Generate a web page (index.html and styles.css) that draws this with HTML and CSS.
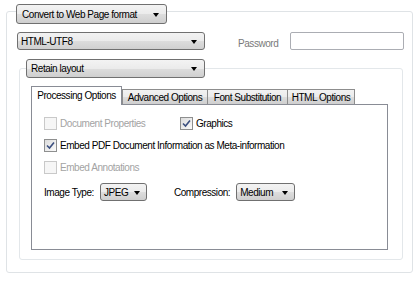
FILE: index.html
```html
<!DOCTYPE html>
<html>
<head>
<meta charset="utf-8">
<link rel="stylesheet" href="styles.css">
</head>
<body>
<div class="outer">
  <div class="combo legend-combo"><span>Convert to Web Page format</span><i class="arrow"></i></div>
  <div class="row1">
    <div class="combo enc-combo"><span>HTML-UTF8</span><i class="arrow"></i></div>
    <span class="pw-label">Password</span>
    <div class="pw-input"></div>
  </div>
  <div class="inner">
    <div class="combo layout-combo"><span>Retain layout</span><i class="arrow"></i></div>
    <div class="tabs">
      <div class="tab selected">Processing Options</div>
      <div class="tab t2">Advanced Options</div>
      <div class="tab t3">Font Substitution</div>
      <div class="tab t4">HTML Options</div>
    </div>
    <div class="panel">
      <div class="cb-row">
        <label class="cb disabled doc"><span class="box"></span>Document Properties</label>
        <label class="cb"><span class="box checked"><svg viewBox="0 0 9 9" width="9" height="9"><path d="M1 4.5 L3.5 7 L8 1.5" fill="none" stroke="#3b4f7f" stroke-width="1.6"/></svg></span>Graphics</label>
      </div>
      <div class="cb-row">
        <label class="cb"><span class="box checked"><svg viewBox="0 0 9 9" width="9" height="9"><path d="M1 4.5 L3.5 7 L8 1.5" fill="none" stroke="#3b4f7f" stroke-width="1.6"/></svg></span>Embed PDF Document Information as Meta-information</label>
      </div>
      <div class="cb-row">
        <label class="cb disabled"><span class="box"></span>Embed Annotations</label>
      </div>
      <div class="img-row">
        <span class="lbl">Image Type:</span>
        <div class="combo small jpeg"><span>JPEG</span><i class="arrow"></i></div>
        <span class="lbl comp">Compression:</span>
        <div class="combo small medium"><span>Medium</span><i class="arrow"></i></div>
      </div>
    </div>
  </div>
</div>
</body>
</html>
```
FILE: styles.css
```css
* { box-sizing: border-box; }
html, body { margin: 0; padding: 0; background: #fff; }
body {
  font-family: "Liberation Sans", Arial, sans-serif;
  font-size: 10px;
  letter-spacing: -0.45px;
  color: #000;
  width: 420px;
  height: 281px;
  overflow: hidden;
}
.outer {
  margin: 11px 0 0 6px;
  width: 407px;
  height: 262px;
  border: 1px solid #dfe3e6;
  border-radius: 3px;
  padding: 0 0 0 9px;
}
.combo {
  display: flex;
  align-items: center;
  justify-content: space-between;
  border: 1px solid #707070;
  border-radius: 3px;
  background: linear-gradient(#f3f3f3 0%, #ebebeb 50%, #dddddd 51%, #cfcfcf 100%);
  padding: 0 7px 0 5px;
  color: #000;
  white-space: nowrap;
}
.arrow {
  width: 0; height: 0;
  border-left: 3.5px solid transparent;
  border-right: 3.5px solid transparent;
  border-top: 4px solid #000;
  margin-top: 1px;
}
.legend-combo {
  width: 151px;
  height: 20px;
  margin-top: -8px;
}
.row1 {
  display: flex;
  align-items: flex-start;
  margin-top: 8px;
  margin-left: 1px;
}
.enc-combo {
  width: 188px;
  height: 18px;
  padding-left: 3px;
  background: linear-gradient(#f2f2f2 0%, #ebebeb 50%, #dddddd 51%, #d0d0d0 100%);
}
.pw-label {
  color: #7a7a7a;
  margin-left: 33px;
  margin-top: 6px;
  width: 52px;
}
.pw-input {
  width: 114px;
  height: 18px;
  border: 1px solid #abadb3;
  border-radius: 2px;
  background: #fff;
}
.inner {
  margin: 18px 0 0 3px;
  width: 384px;
  height: 192px;
  border: 1px solid #e3e7ea;
  border-radius: 3px;
  padding: 0 0 0 6px;
}
.layout-combo {
  width: 179px;
  height: 19px;
  margin-top: -10px;
  padding-left: 4px;
}
.tabs {
  display: flex;
  align-items: flex-end;
  margin-top: 7px;
  margin-left: 5px;
  height: 19px;
}
.tab {
  height: 15px;
  border: 1px solid #8d8d8d;
  border-bottom: none;
  background: linear-gradient(#f2f2f2 0%, #ebebeb 50%, #dddddd 51%, #cfcfcf 100%);
  display: flex;
  align-items: center;
  justify-content: center;
  white-space: nowrap;
  margin-left: -1px;
  padding-top: 1px;
}
.tab.selected {
  width: 91px;
  background: #fff;
  border-color: #898c95;
  margin-left: 0;
  position: relative;
  z-index: 2;
  margin-bottom: -1px;
  height: 19px;
  padding-top: 0;
  padding-bottom: 2px;
}
.t2 { width: 86px; margin-left: 0; }
.t3 { width: 81px; }
.t4 { width: 68px; }
.panel {
  margin-left: 5px;
  width: 357px;
  height: 146px;
  border: 1px solid #898c95;
  background: #fff;
  padding: 12px 0 0 12px;
  position: relative;
  z-index: 1;
}
.cb-row {
  display: flex;
  height: 22px;
  align-items: flex-start;
}
.cb {
  display: flex;
  align-items: center;
  white-space: nowrap;
}
.cb .box {
  width: 13px;
  height: 13px;
  border: 1px solid #8e8f8f;
  background: linear-gradient(135deg, #dcdcdc, #fbfbfb);
  margin-right: 3px;
  display: flex;
  align-items: center;
  justify-content: center;
}
.cb.disabled { color: #a3a3a3; }
.cb.disabled .box { border-color: #c9c9c9; background: #f6f6f6; }
.cb.doc { width: 136px; }
.img-row {
  display: flex;
  align-items: center;
  margin-top: 0;
}
.lbl { color: #000; }
.combo.small { height: 18px; padding-left: 3px; padding-right: 6px; }
.jpeg { width: 47px; margin-left: 6px; }
.comp { margin-left: 27px; }
.medium { width: 59px; margin-left: 6px; }
```
